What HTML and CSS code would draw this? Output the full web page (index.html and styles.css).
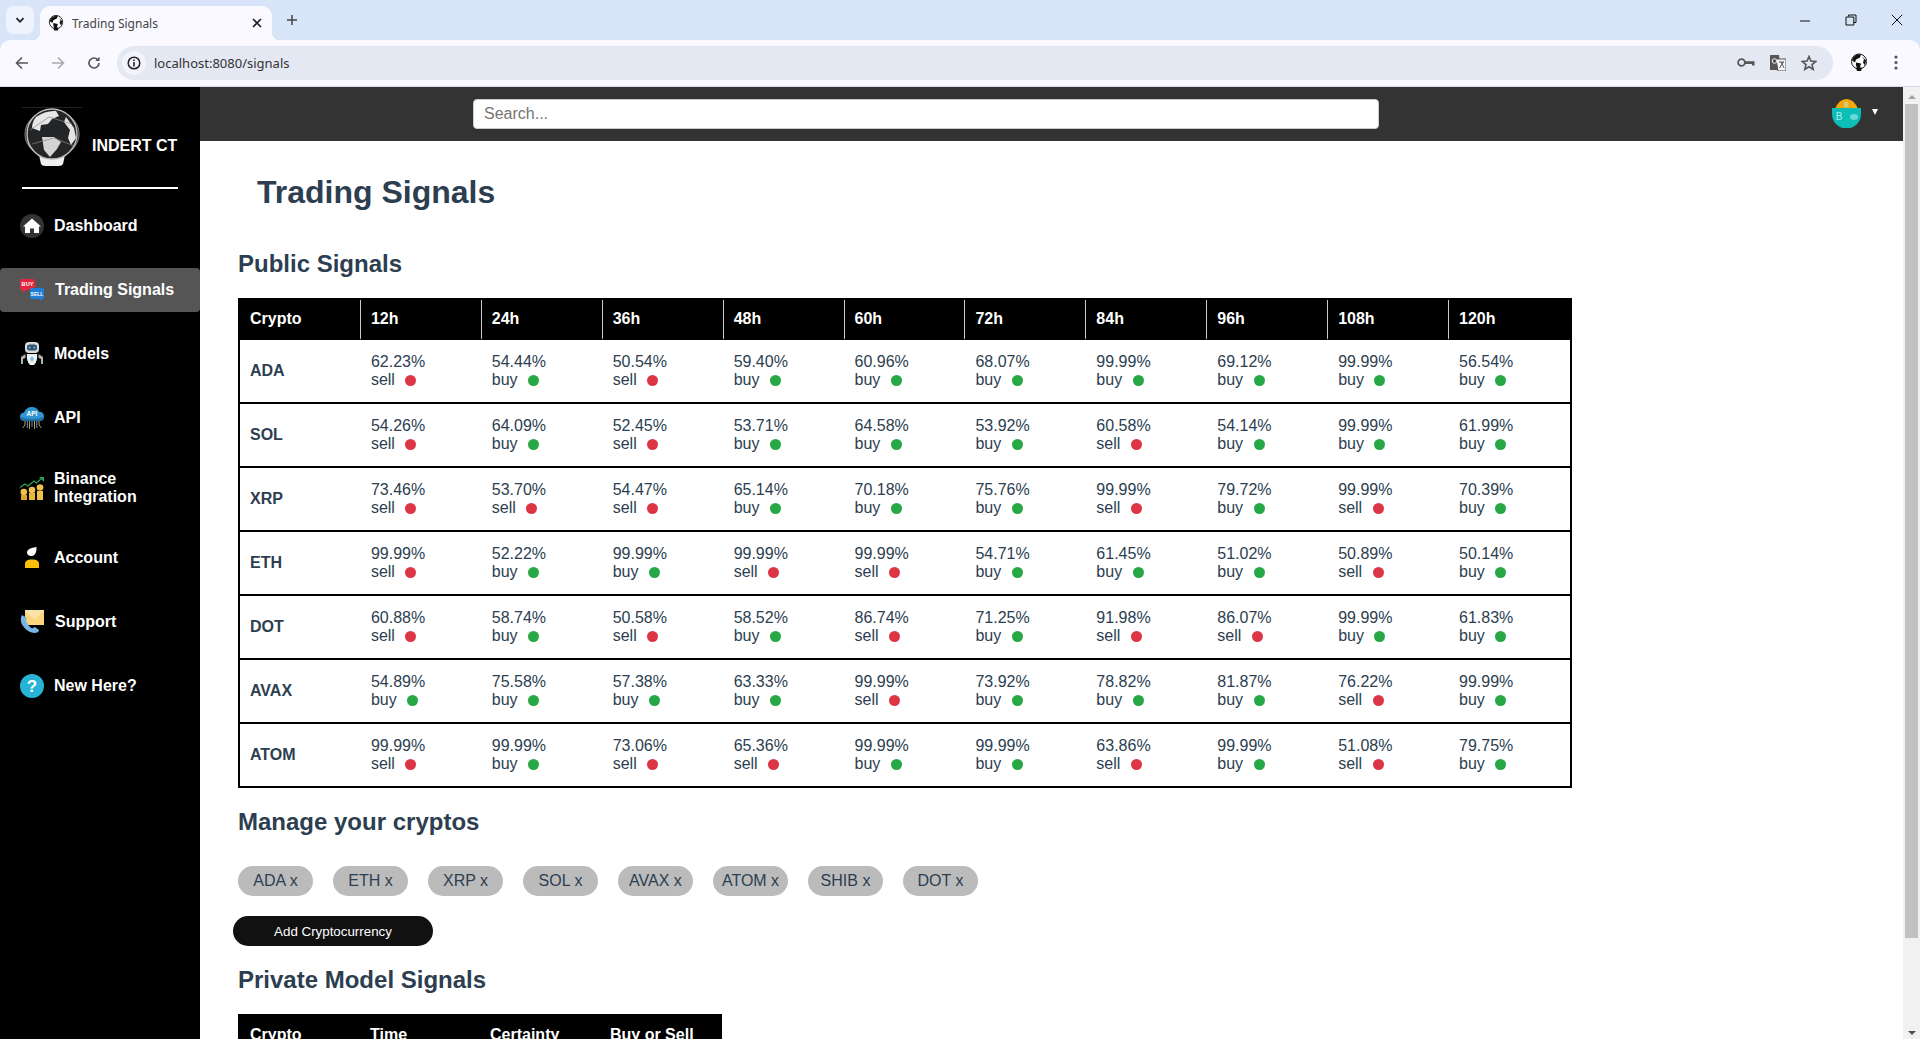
FILE: index.html
```html
<!DOCTYPE html>
<html lang="en">
<head>
<meta charset="utf-8">
<title>Trading Signals</title>
<link rel="stylesheet" href="styles.css">
</head>
<body>
<svg class="defs" width="0" height="0" aria-hidden="true">
  <symbol id="globe" viewBox="0 0 56 58">
    <path d="M15 47 L41 47 L39 56 Q38 58 35 58 L21 58 Q18 58 17 56 Z" fill="#eee"/>
    <ellipse cx="28" cy="26" rx="27" ry="23" fill="none" stroke="#777" stroke-width="1.2"/>
    <circle cx="28" cy="26" r="25" fill="#232527" stroke="#bbb" stroke-width="1.5"/>
    <path d="M12 9 Q22 2 32 3 L35 8 L28 11 L24 16 L17 17 L16 23 L8 20 Q8 14 12 9 Z" fill="#e6e6e6"/>
    <path d="M42 9 L50 20 L52 30 L47 37 L44 30 L46 22 L40 14 Z" fill="#e4e4e4"/>
    <path d="M18 29 L30 29 L37 34 L33 41 L26 49 L20 42 Z" fill="#d4d4d4"/>
    <path d="M6 22 L25 9 L48 16 M8 36 L30 30 L50 38" fill="none" stroke="#888" stroke-width=".7"/>
  </symbol>
  <symbol id="globe-small" viewBox="0 0 18 18">
    <circle cx="9" cy="8" r="7.5" fill="#fff" stroke="#111" stroke-width="1"/>
    <path d="M3 4 Q7 0 11 1 L10 4 L6 6 L5 9 L2 7 Z M12 3 L16 7 L15 12 L13 9 L14 6 Z M6 9 L11 10 L10 14 L8 16 L6 12 Z" fill="#111"/>
    <path d="M6 14 L12 14 L11 17.5 L7 17.5 Z" fill="#111"/>
  </symbol>
</svg>

<header class="chrome">
  <div class="tabstrip">
    <div class="tab-search">
      <svg class="ic" width="12" height="12" viewBox="0 0 12 12"><path d="M2.5 4.2 L6 7.8 L9.5 4.2" fill="none" stroke="#1f1f1f" stroke-width="1.8"/></svg>
    </div>
    <div class="tab">
      <svg class="favicon" width="16" height="16"><use href="#globe-small"/></svg>
      <span class="tab-title">Trading Signals</span>
      <svg class="tab-close" width="10" height="10" viewBox="0 0 10 10"><path d="M1 1 L9 9 M9 1 L1 9" stroke="#1f1f1f" stroke-width="1.6"/></svg>
    </div>
    <svg class="new-tab" width="12" height="12" viewBox="0 0 12 12"><path d="M6 1 V11 M1 6 H11" stroke="#444" stroke-width="1.5"/></svg>
    <div class="win-controls">
      <svg width="12" height="12" viewBox="0 0 12 12"><path d="M1 7 H11" stroke="#111" stroke-width="1"/></svg>
      <svg width="12" height="12" viewBox="0 0 12 12"><path d="M3.5 2.5 V1 H11 V8.5 H9 M1 3 H8.8 V11 H1 Z" fill="none" stroke="#111" stroke-width="1"/></svg>
      <svg width="12" height="12" viewBox="0 0 12 12"><path d="M.8 .8 L11.2 11.2 M11.2 .8 L.8 11.2" stroke="#111" stroke-width="1"/></svg>
    </div>
  </div>
  <div class="toolbar">
    <svg class="tool" width="14" height="14" viewBox="0 0 14 14"><path d="M13 7 H2 M7 1.5 L1.5 7 L7 12.5" fill="none" stroke="#555" stroke-width="1.6"/></svg>
    <svg class="tool" width="14" height="14" viewBox="0 0 14 14"><path d="M1 7 H12 M7 1.5 L12.5 7 L7 12.5" fill="none" stroke="#aaa" stroke-width="1.6"/></svg>
    <svg class="tool" width="14" height="14" viewBox="0 0 14 14"><path d="M12 7 A5 5 0 1 1 10.5 3.4" fill="none" stroke="#555" stroke-width="1.6"/><path d="M12.5 .8 V5 H8.3 Z" fill="#555"/></svg>
    <div class="omnibox">
      <span class="site-info">
        <svg width="14" height="14" viewBox="0 0 14 14"><circle cx="7" cy="7" r="5.8" fill="none" stroke="#222" stroke-width="1.5"/><path d="M7 6 V10.4 M7 3.5 V5" stroke="#222" stroke-width="1.6"/></svg>
      </span>
      <span class="url">localhost:8080/signals</span>
      <span class="omni-icons">
        <svg width="18" height="12" viewBox="0 0 18 12"><circle cx="4.5" cy="5.5" r="3.4" fill="none" stroke="#555" stroke-width="1.8"/><path d="M8 4.2 H17.5 V8.5 H15 V7 H8 Z" fill="#555"/></svg>
        <svg width="16" height="17" viewBox="0 0 16 17"><path d="M0 1 H9 L11 16 H0 Z" fill="#555"/><path d="M6 5 H16 V17 H8 Z" fill="#f5f5fa" stroke="#555"/><circle cx="4.5" cy="7" r="2.3" fill="none" stroke="#eee"/><path d="M9 8 H14 M11 8 L14 14 M13.5 8 L9.5 14" stroke="#555" fill="none"/></svg>
        <svg width="16" height="16" viewBox="0 0 16 16"><path d="M8 1.5 L9.9 6 L14.8 6.4 L11 9.6 L12.2 14.4 L8 11.8 L3.8 14.4 L5 9.6 L1.2 6.4 L6.1 6 Z" fill="none" stroke="#555" stroke-width="1.6"/></svg>
      </span>
    </div>
    <svg class="profile" width="18" height="19"><use href="#globe-small"/></svg>
    <svg class="kebab" width="4" height="15" viewBox="0 0 4 15"><circle cx="2" cy="2" r="1.6" fill="#4a5568"/><circle cx="2" cy="7.5" r="1.6" fill="#4a5568"/><circle cx="2" cy="13" r="1.6" fill="#4a5568"/></svg>
  </div>
</header>

<div class="viewport">
  <aside class="sidebar">
    <div class="brand">
      <svg class="brand-logo" width="56" height="58"><use href="#globe"/></svg>
      <span class="brand-name">INDERT CT</span>
    </div>
    <hr class="brand-rule">
    <nav class="nav">
      <a class="nav-item">
        <svg class="nav-icon" viewBox="0 0 24 24"><circle cx="12" cy="12" r="12" fill="#333"/><path d="M12 4.5 L21 12.5 L19 12.5 L19 19 L14 19 L14 14.5 L10 14.5 L10 19 L5 19 L5 12.5 L3 12.5 Z" fill="#fff"/></svg>
        <span>Dashboard</span>
      </a>
      <a class="nav-item active">
        <svg class="nav-icon" viewBox="0 0 24 24">
          <path d="M2 1 H13 Q15 1 15 3 V10 Q15 12 13 12 H6 L3 15 V12 H2 Q0 12 0 10 V3 Q0 1 2 1 Z" fill="#e3263f"/>
          <path d="M12 10 H22 Q24 10 24 12 V19 Q24 21 22 21 V23 L19 21 H12 Q10 21 10 19 V12 Q10 10 12 10 Z" fill="#1f7fd6"/>
          <text class="icon-text" x="7.5" y="8.4" font-size="5.6">BUY</text>
          <text class="icon-text" x="17" y="17.6" font-size="5">SELL</text>
        </svg>
        <span>Trading Signals</span>
      </a>
      <a class="nav-item">
        <svg class="nav-icon" viewBox="0 0 24 24">
          <rect x="5" y="0" width="14" height="11" rx="4" fill="#d5dbde"/>
          <rect x="7" y="2.5" width="10" height="6" rx="2.5" fill="#33506b"/>
          <circle cx="9.7" cy="5.5" r="1.1" fill="#5db4ee"/><circle cx="14.3" cy="5.5" r="1.1" fill="#5db4ee"/>
          <path d="M7 12 H17 Q18 19 14 23 H10 Q6 19 7 12 Z" fill="#eef1f3"/>
          <path d="M12 14 L14 17 L12 20 L10 17 Z" fill="#7cc0ee"/>
          <path d="M5.5 12 L1 15 V22 H3 V17 L5.5 16 Z M18.5 12 L23 15 V22 H21 V17 L18.5 16 Z" fill="#aab4b9"/>
        </svg>
        <span>Models</span>
      </a>
      <a class="nav-item">
        <svg class="nav-icon" viewBox="0 0 24 24">
          <path d="M5 15 Q0 15 0 10.5 Q0 7 4 6.5 Q6 1 12 1 Q17 1 19 5.5 Q24 6 24 10.5 Q24 15 19 15 Z" fill="#2f95d4"/>
          <path d="M5 15 H19 Q24 15 24 10.5 Q20 13 12 13 Q4 13 0 10.5 Q0 15 5 15 Z" fill="#1f6fa8"/>
          <text class="icon-text" x="12" y="10" font-size="6.5">API</text>
          <path d="M5 15 V19 L2.5 22 M9.5 15 V23 M14.5 15 V23 M19 15 V19 L21.5 22" fill="none" stroke="#c89a4a" stroke-width="1"/>
          <path d="M7.3 15 V22 M12 15 V21 M16.8 15 V22" fill="none" stroke="#4ba0dd" stroke-width="1"/>
        </svg>
        <span>API</span>
      </a>
      <a class="nav-item">
        <svg class="nav-icon" viewBox="0 0 24 24">
          <path d="M0 11.5 L5 8 L8 10 L14 5 L16.5 7 L22 2" fill="none" stroke="#2f9e58" stroke-width="1.3"/>
          <path d="M19 1 H24 V6 Z" fill="#2f9e58"/>
          <circle cx="3.8" cy="16" r="3.3" fill="#f0c24b"/><rect x="1" y="19" width="6" height="5" fill="#d9a52e"/>
          <circle cx="12" cy="14" r="3.3" fill="#f0c24b"/><rect x="9" y="17" width="6" height="7" fill="#e9b93c"/>
          <circle cx="20" cy="11.5" r="3.3" fill="#f0c24b"/><rect x="17" y="15" width="6" height="9" fill="#f0c24b"/>
        </svg>
        <span>Binance<br>Integration</span>
      </a>
      <a class="nav-item">
        <svg class="nav-icon" viewBox="0 0 24 24">
          <path d="M16.5 1 Q17 8 12.5 10 Q7 10.5 7 6 Q7.5 2 16.5 1 Z" fill="#fff"/>
          <path d="M5 22 V18 Q5 14 10 13.5 H14 Q19 14 19 18 V22 Z" fill="#fbbf0a"/>
        </svg>
        <span>Account</span>
      </a>
      <a class="nav-item">
        <svg class="nav-icon" viewBox="0 0 24 24">
          <rect x="5" y="0" width="19" height="15" fill="#fcd67c"/>
          <path d="M5 0 H24 L24 1 L15 9 Q14.5 9.5 14 9 L5 1 Z" fill="#fbe4a9"/>
          <path d="M2 5 Q-1 10 3 16 Q7 22 14 23 Q19 23 19 20 L15 17 L12 18.5 Q7 15 6 10 L7 8 Z" fill="#78b4e6"/>
        </svg>
        <span class="nudge">Support</span>
      </a>
      <a class="nav-item">
        <svg class="nav-icon" viewBox="0 0 24 24">
          <circle cx="12" cy="12" r="12" fill="#26b3d6"/>
          <text class="icon-q" x="12" y="18.4" font-size="17">?</text>
        </svg>
        <span>New Here?</span>
      </a>
    </nav>
  </aside>

  <div class="page">
    <div class="topbar">
      <input class="search" type="text" placeholder="Search...">
      <div class="user">
        <svg class="avatar" width="29" height="29" viewBox="0 0 29 29">
          <path d="M3 10 Q7 0 14.5 0 Q22 0 26 10 Z" fill="#f5a80a"/>
          <path d="M0 9 H29 V15 A14.5 14.5 0 0 1 0 15 Z" fill="#0dbdb8"/>
          <text class="avatar-b" x="7" y="21" font-size="10">B</text>
          <text class="avatar-b" x="14.5" y="8" font-size="7">B</text>
          <ellipse cx="22" cy="18" rx="4" ry="3" fill="#69dbd6"/>
        </svg>
        <span class="caret"></span>
      </div>
    </div>
    <main class="content">
      <h1 class="page-title">Trading Signals</h1>
      <h2 class="section-title">Public Signals</h2>
      <table class="signals">
        <thead>
          <tr><th>Crypto</th><th>12h</th><th>24h</th><th>36h</th><th>48h</th><th>60h</th><th>72h</th><th>84h</th><th>96h</th><th>108h</th><th>120h</th></tr>
        </thead>
        <tbody>
          <tr><td class="sym">ADA</td>
            <td>62.23%<br>sell <i class="dot sell"></i></td><td>54.44%<br>buy <i class="dot buy"></i></td><td>50.54%<br>sell <i class="dot sell"></i></td><td>59.40%<br>buy <i class="dot buy"></i></td><td>60.96%<br>buy <i class="dot buy"></i></td><td>68.07%<br>buy <i class="dot buy"></i></td><td>99.99%<br>buy <i class="dot buy"></i></td><td>69.12%<br>buy <i class="dot buy"></i></td><td>99.99%<br>buy <i class="dot buy"></i></td><td>56.54%<br>buy <i class="dot buy"></i></td></tr>
          <tr><td class="sym">SOL</td>
            <td>54.26%<br>sell <i class="dot sell"></i></td><td>64.09%<br>buy <i class="dot buy"></i></td><td>52.45%<br>sell <i class="dot sell"></i></td><td>53.71%<br>buy <i class="dot buy"></i></td><td>64.58%<br>buy <i class="dot buy"></i></td><td>53.92%<br>buy <i class="dot buy"></i></td><td>60.58%<br>sell <i class="dot sell"></i></td><td>54.14%<br>buy <i class="dot buy"></i></td><td>99.99%<br>buy <i class="dot buy"></i></td><td>61.99%<br>buy <i class="dot buy"></i></td></tr>
          <tr><td class="sym">XRP</td>
            <td>73.46%<br>sell <i class="dot sell"></i></td><td>53.70%<br>sell <i class="dot sell"></i></td><td>54.47%<br>sell <i class="dot sell"></i></td><td>65.14%<br>buy <i class="dot buy"></i></td><td>70.18%<br>buy <i class="dot buy"></i></td><td>75.76%<br>buy <i class="dot buy"></i></td><td>99.99%<br>sell <i class="dot sell"></i></td><td>79.72%<br>buy <i class="dot buy"></i></td><td>99.99%<br>sell <i class="dot sell"></i></td><td>70.39%<br>buy <i class="dot buy"></i></td></tr>
          <tr><td class="sym">ETH</td>
            <td>99.99%<br>sell <i class="dot sell"></i></td><td>52.22%<br>buy <i class="dot buy"></i></td><td>99.99%<br>buy <i class="dot buy"></i></td><td>99.99%<br>sell <i class="dot sell"></i></td><td>99.99%<br>sell <i class="dot sell"></i></td><td>54.71%<br>buy <i class="dot buy"></i></td><td>61.45%<br>buy <i class="dot buy"></i></td><td>51.02%<br>buy <i class="dot buy"></i></td><td>50.89%<br>sell <i class="dot sell"></i></td><td>50.14%<br>buy <i class="dot buy"></i></td></tr>
          <tr><td class="sym">DOT</td>
            <td>60.88%<br>sell <i class="dot sell"></i></td><td>58.74%<br>buy <i class="dot buy"></i></td><td>50.58%<br>sell <i class="dot sell"></i></td><td>58.52%<br>buy <i class="dot buy"></i></td><td>86.74%<br>sell <i class="dot sell"></i></td><td>71.25%<br>buy <i class="dot buy"></i></td><td>91.98%<br>sell <i class="dot sell"></i></td><td>86.07%<br>sell <i class="dot sell"></i></td><td>99.99%<br>buy <i class="dot buy"></i></td><td>61.83%<br>buy <i class="dot buy"></i></td></tr>
          <tr><td class="sym">AVAX</td>
            <td>54.89%<br>buy <i class="dot buy"></i></td><td>75.58%<br>buy <i class="dot buy"></i></td><td>57.38%<br>buy <i class="dot buy"></i></td><td>63.33%<br>buy <i class="dot buy"></i></td><td>99.99%<br>sell <i class="dot sell"></i></td><td>73.92%<br>buy <i class="dot buy"></i></td><td>78.82%<br>buy <i class="dot buy"></i></td><td>81.87%<br>buy <i class="dot buy"></i></td><td>76.22%<br>sell <i class="dot sell"></i></td><td>99.99%<br>buy <i class="dot buy"></i></td></tr>
          <tr><td class="sym">ATOM</td>
            <td>99.99%<br>sell <i class="dot sell"></i></td><td>99.99%<br>buy <i class="dot buy"></i></td><td>73.06%<br>sell <i class="dot sell"></i></td><td>65.36%<br>sell <i class="dot sell"></i></td><td>99.99%<br>buy <i class="dot buy"></i></td><td>99.99%<br>buy <i class="dot buy"></i></td><td>63.86%<br>sell <i class="dot sell"></i></td><td>99.99%<br>buy <i class="dot buy"></i></td><td>51.08%<br>sell <i class="dot sell"></i></td><td>79.75%<br>buy <i class="dot buy"></i></td></tr>
        </tbody>
      </table>

      <h2 class="section-title">Manage your cryptos</h2>
      <div class="pills">
        <span class="pill">ADA x</span><span class="pill">ETH x</span><span class="pill">XRP x</span><span class="pill">SOL x</span><span class="pill">AVAX x</span><span class="pill">ATOM x</span><span class="pill">SHIB x</span><span class="pill">DOT x</span>
      </div>
      <button class="add-btn" type="button">Add Cryptocurrency</button>

      <h2 class="section-title">Private Model Signals</h2>
      <table class="signals private">
        <thead>
          <tr><th>Crypto</th><th>Time</th><th>Certainty</th><th>Buy or Sell</th></tr>
        </thead>
      </table>
    </main>
  </div>

  <div class="scrollbar">
    <span class="arrow up"></span>
    <span class="thumb"></span>
    <span class="arrow down"></span>
  </div>
</div>
</body>
</html>
```
FILE: styles.css
```css
* { box-sizing: border-box; }
html, body { margin: 0; height: 100%; }
body {
  display: flex;
  flex-direction: column;
  height: 1039px;
  overflow: hidden;
  font-family: "Liberation Sans", Arial, sans-serif;
  font-size: 16px;
  color: #2c3e50;
  background: #fff;
}
.defs { position: absolute; }

/* browser chrome */
.chrome { flex: none; height: 87px; background: #d8e4f7; }
.tabstrip { height: 40px; display: flex; align-items: flex-end; padding-left: 6px; position: relative; }
.tab-search {
  width: 28px; height: 28px; margin: 0 6px 6px 0;
  background: #eef3fd; border-radius: 8px;
  display: flex; align-items: center; justify-content: center;
}
.tab {
  width: 232px; height: 34px;
  background: #f9f9ff; border-radius: 10px 10px 0 0;
  display: flex; align-items: center; padding: 0 10px 0 8px;
  position: relative;
}
.tab::before, .tab::after {
  content: ""; position: absolute; bottom: 0; width: 8px; height: 8px;
}
.tab::before { left: -8px; background: radial-gradient(circle at 0 0, transparent 8px, #f9f9ff 8.5px); }
.tab::after { right: -8px; background: radial-gradient(circle at 100% 0, transparent 8px, #f9f9ff 8.5px); }
.favicon { flex: none; }
.tab-title {
  flex: 1; margin-left: 8px;
  font: 12px "Noto Sans", "Open Sans", sans-serif; color: #444;
}
.new-tab { margin: 0 0 14px 14px; }
.win-controls {
  margin-left: auto; height: 40px; display: flex; align-items: center;
  gap: 34px; padding-right: 17px;
}
.toolbar {
  height: 47px; background: #f9f9ff;
  border-radius: 10px 10px 0 0;
  border-bottom: 1px solid #d9d9e2;
  display: flex; align-items: center; padding: 0 0 1px 15px;
}
.tool { flex: none; margin-right: 22px; }
.omnibox {
  flex: none; width: 1716px; height: 34px; margin-left: -6px;
  background: #e4e8f3; border-radius: 17px;
  display: flex; align-items: center; padding-left: 5px;
}
.site-info {
  width: 24px; height: 24px; border-radius: 50%; background: #f3f4fb;
  display: flex; align-items: center; justify-content: center;
}
.url { margin-left: 8px; font: 13px "Noto Sans", "Open Sans", sans-serif; color: #333; }
.omni-icons { margin-left: auto; display: flex; align-items: center; gap: 15px; padding-right: 16px; }
.profile { margin-left: 17px; flex: none; }
.kebab { margin-left: 26px; flex: none; }

/* app */
.viewport { flex: 1; min-height: 0; display: flex; }
.sidebar { flex: none; width: 200px; background: #000; color: #fff; padding-top: 20px; }
.brand { height: 60px; margin-left: 24px; display: flex; align-items: flex-start; position: relative; }
.brand::before {
  content: ""; position: absolute; left: -2px; top: 0; width: 60px; height: 1px; background: #222;
}
.brand-logo { flex: none; margin-top: 1px; }
.brand-name { margin: 30px 0 0 12px; font-weight: 700; line-height: 18px; white-space: nowrap; }
.brand-rule { margin: 20px 22px 15px; border: 0; height: 2px; background: #fff; }
.nav { display: flex; flex-direction: column; gap: 20px; }
.nav-item {
  display: flex; align-items: center; gap: 10px;
  padding: 10px 10px 10px 20px;
  font-weight: 700; line-height: 18px; color: #fff;
  border-radius: 4px;
}
.nav-item.active { background: #555; }
.nav-icon { flex: none; width: 24px; height: 24px; }
.nudge { margin-left: 1px; }
.active span { margin-left: 1px; }
.icon-text { fill: #fff; text-anchor: middle; font-family: "Liberation Sans", sans-serif; font-weight: 700; }
.icon-q { fill: #fff; text-anchor: middle; font-family: "Liberation Sans", sans-serif; font-weight: 700; }

.page { flex: 1; min-width: 0; display: flex; flex-direction: column; }
.topbar {
  flex: none; height: 54px; background: #333;
  display: flex; align-items: center; padding: 0 25px 0 273px;
}
.search {
  width: 906px; height: 30px; margin-top: 0;
  border: 1px solid #ccc; border-radius: 4px; padding: 0 10px;
  font: 16px "Liberation Sans", Arial, sans-serif; background: #fff;
}
.search::placeholder { color: #757575; }
.user { margin-left: auto; display: flex; align-items: center; gap: 11px; margin-top: -2px; }
.avatar { display: block; }
.avatar-b { fill: #a9efe9; text-anchor: middle; font-family: "Liberation Sans", sans-serif; }
.caret {
  width: 0; height: 0; margin-bottom: 3px;
  border-left: 3.5px solid transparent; border-right: 3.5px solid transparent;
  border-top: 6px solid #fff;
}

.content { flex: 1; min-height: 0; overflow: hidden; padding: 33px 38px 0; }
.page-title { margin: 0 0 39px 19px; font-size: 32px; line-height: 37px; font-weight: 700; }
.section-title { margin: 20px 0; font-size: 24px; line-height: 28px; font-weight: 700; }
.page-title + .section-title { margin-top: 0; }

.signals {
  width: 1334px; table-layout: fixed;
  border: 2px solid #000; border-collapse: separate; border-spacing: 0;
}
.signals th {
  height: 38px; padding: 0 10px;
  background: #000; color: #fff; text-align: left;
  font-weight: 700; line-height: 18px;
  border-right: 1px solid #ccc;
  border-bottom: 2px solid #000;
  box-sizing: content-box;
}
.signals th { height: 38px; }
.signals th:last-child { border-right: 0; }
.signals td {
  height: 64px; padding: 0 10px;
  line-height: 18px; vertical-align: middle;
  border-bottom: 2px solid #000;
  white-space: nowrap;
}
.signals tr:last-child td { height: 62px; border-bottom: 0; }
.signals .sym { font-weight: 700; }
.dot {
  display: inline-block; width: 11px; height: 11px; border-radius: 50%;
  margin-left: 6px; vertical-align: -1px;
}
.dot.sell { background: #dc3545; }
.dot.buy { background: #28a745; }
.signals.private { width: 484px; }
.signals.private th { border-right: 0; }

.pills { display: flex; gap: 20px; margin: 30px 0 20px; }
.pill {
  flex: none; width: 75px; height: 30px; line-height: 30px; text-align: center;
  background: #bbb; border-radius: 15px; white-space: nowrap;
}
.add-btn {
  display: block; width: 200px; height: 30px; margin-left: -5px;
  background: #111; color: #fff; border: 0; border-radius: 15px;
  font: 13.33px "Liberation Sans", Arial, sans-serif;
}

.scrollbar {
  flex: none; width: 17px; background: #f1f1f1;
  display: flex; flex-direction: column; align-items: center;
}
.arrow { flex: none; width: 0; height: 0; border-left: 4px solid transparent; border-right: 4px solid transparent; }
.arrow.up { margin: 8px 0 5px; border-bottom: 4px solid #a3a3a3; }
.arrow.down { margin: auto 0 4px; border-top: 4px solid #505050; }
.thumb { flex: none; width: 13px; height: 834px; background: #c1c1c1; }
```
